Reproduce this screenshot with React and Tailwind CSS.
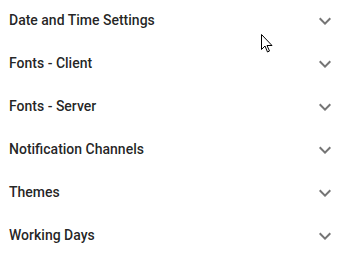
import React from "react";

const items = [
  "Date and Time Settings",
  "Fonts - Client",
  "Fonts - Server",
  "Notification Channels",
  "Themes",
  "Working Days",
];

function Chevron() {
  return (
    <svg width="24" height="24" viewBox="0 0 24 24" className="shrink-0">
      <path d="M16.59 8.59L12 13.17 7.41 8.59 6 10l6 6 6-6z" fill="#757575" />
    </svg>
  );
}

export default function App() {
  return (
    <div
      className="relative w-[344px] h-[280px] bg-white"
      style={{ fontFamily: "Roboto, 'Noto Sans', sans-serif" }}
    >
      <div className="flex flex-col">
        {items.map((t) => (
          <div
            key={t}
            className="flex items-center justify-between h-[43px] pb-[2px] pl-[9px] pr-[7px]"
          >
            <span className="text-[14px] font-medium text-[rgba(0,0,0,0.87)]">{t}</span>
            <Chevron />
          </div>
        ))}
      </div>
      <svg
        className="absolute left-[261px] top-[34px]"
        width="14"
        height="20"
        viewBox="0 0 14 20"
      >
        <path
          d="M0.5 0.5 L0.5 15.5 L4 12 L6.5 18 L8.5 17 L6 11.5 L11 11.5 Z"
          fill="white"
          stroke="black"
          strokeWidth="1"
          strokeLinejoin="miter"
        />
      </svg>
    </div>
  );
}
